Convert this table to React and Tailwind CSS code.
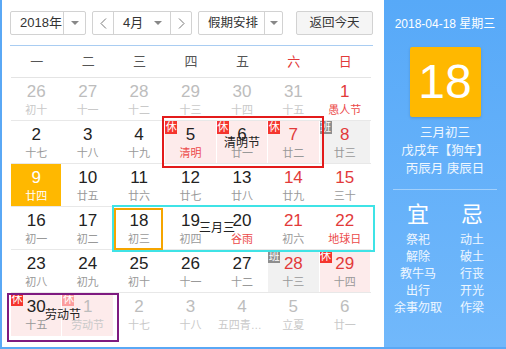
import React from 'react';

const weekdays = ['一', '二', '三', '四', '五', '六', '日'];

// d: day, l: lunar, o: other month, r: red number, lr: red lunar, b: badge, sel
const rows = [
  [
    { d: 26, l: '初十', o: true },
    { d: 27, l: '十一', o: true },
    { d: 28, l: '十二', o: true },
    { d: 29, l: '十三', o: true },
    { d: 30, l: '十四', o: true },
    { d: 31, l: '十五', o: true },
    { d: 1, l: '愚人节', r: true, lr: true },
  ],
  [
    { d: 2, l: '十七' },
    { d: 3, l: '十八' },
    { d: 4, l: '十九' },
    { d: 5, l: '清明', lr: true, b: '休' },
    { d: 6, l: '廿一', b: '休' },
    { d: 7, l: '廿二', r: true, b: '休' },
    { d: 8, l: '廿三', r: true, b: '班' },
  ],
  [
    { d: 9, l: '廿四', sel: true },
    { d: 10, l: '廿五' },
    { d: 11, l: '廿六' },
    { d: 12, l: '廿七' },
    { d: 13, l: '廿八' },
    { d: 14, l: '廿九', r: true },
    { d: 15, l: '三十', r: true },
  ],
  [
    { d: 16, l: '初一' },
    { d: 17, l: '初二' },
    { d: 18, l: '初三' },
    { d: 19, l: '初四' },
    { d: 20, l: '谷雨', lr: true },
    { d: 21, l: '初六', r: true },
    { d: 22, l: '地球日', r: true, lr: true },
  ],
  [
    { d: 23, l: '初八' },
    { d: 24, l: '初九' },
    { d: 25, l: '初十' },
    { d: 26, l: '十一' },
    { d: 27, l: '十二' },
    { d: 28, l: '十三', r: true, b: '班' },
    { d: 29, l: '十四', r: true, b: '休' },
  ],
  [
    { d: 30, l: '十五', b: '休' },
    { d: 1, l: '劳动节', o: true, b: '休' },
    { d: 2, l: '十七', o: true },
    { d: 3, l: '十八', o: true },
    { d: 4, l: '五四青年节', o: true },
    { d: 5, l: '立夏', o: true },
    { d: 6, l: '廿一', o: true },
  ],
];

const yi = ['祭祀', '解除', '教牛马', '出行', '余事勿取'];
const ji = ['动土', '破土', '行丧', '开光', '作梁'];

function Caret() {
  return <span className="w-0 h-0 border-l-[4px] border-r-[4px] border-t-[4px] border-l-transparent border-r-transparent border-t-[#888]" />;
}

function Chevron({ dir }) {
  return (
    <svg width="7" height="11" viewBox="0 0 7 11" fill="none" stroke="#777" strokeWidth="1">
      {dir === 'left' ? <path d="M6 0.5 L1 5.5 L6 10.5" /> : <path d="M1 0.5 L6 5.5 L1 10.5" />}
    </svg>
  );
}

function Cell({ c }) {
  let bg = '';
  if (c.sel) bg = 'bg-[#ffb800]';
  else if (c.b === '休') bg = 'bg-[#fdebeb]';
  else if (c.b === '班') bg = 'bg-[#f1f1f1]';

  let num = 'text-[#222]';
  if (c.sel) num = 'text-white';
  else if (c.o) num = 'text-[#bdbdbd]';
  else if (c.r) num = 'text-[#e23a3a]';

  let lunar = 'text-[#999]';
  if (c.sel) lunar = 'text-white';
  else if (c.o) lunar = 'text-[#c9c9c9]';
  else if (c.lr) lunar = 'text-[#ec4a4a]';

  let badge = '';
  if (c.b === '休') badge = c.o ? 'bg-[#fc9d9d]' : 'bg-[#f5352e]';
  if (c.b === '班') badge = 'bg-[#8e8e8e]';

  return (
    <div className={`relative h-full flex flex-col items-center border-r border-white ${bg}`}>
      {c.b && (
        <span className={`absolute left-0 top-0 w-[12px] h-[13px] text-[11px] leading-[13px] text-white text-center ${badge}`}>
          {c.b}
        </span>
      )}
      <span className={`pt-[4px] text-[17px] leading-[20px] ${num}`}>{c.d}</span>
      <span className={`mt-[1px] w-full px-[1px] text-center truncate text-[11px] leading-[14px] ${lunar}`}>{c.l}</span>
    </div>
  );
}

export default function App() {
  return (
    <div className="w-[506px] h-[349px] flex border-l-2 border-b-2 border-[#5aa8f5] font-[family-name:Liberation_Sans,Noto_Sans_CJK_SC,sans-serif] overflow-hidden">
      {/* Left: calendar */}
      <div className="w-[382px] bg-white pl-[8px] pt-[11px] flex flex-col">
        {/* Toolbar */}
        <div className="flex items-center h-[24px] text-[12px] text-[#333]">
          <div className="flex h-full w-[76px] border border-[#d2d2d2] rounded-[2px]">
            <span className="flex-1 flex items-center pl-[9px] text-[13px]">2018年</span>
            <span className="w-[22px] flex items-center justify-center border-l border-[#d2d2d2]"><Caret /></span>
          </div>
          <div className="ml-[6px] flex h-full w-[100px] border border-[#d2d2d2] rounded-[2px]">
            <span className="w-[21px] flex items-center justify-center border-r border-[#d2d2d2]"><Chevron dir="left" /></span>
            <span className="flex-1 flex items-center justify-between pl-[9px] pr-[8px] text-[13px]">
              4月
              <Caret />
            </span>
            <span className="w-[21px] flex items-center justify-center border-l border-[#d2d2d2]"><Chevron dir="right" /></span>
          </div>
          <div className="ml-[6px] flex h-full w-[85px] border border-[#d2d2d2] rounded-[2px]">
            <span className="flex-1 flex items-center pl-[9px] text-[12.5px]">假期安排</span>
            <span className="w-[18px] flex items-center justify-center border-l border-[#d2d2d2]"><Caret /></span>
          </div>
          <button className="ml-[13px] h-full w-[77px] border border-[#d2d2d2] rounded-[2px] bg-[#f5f5f5] text-[12.5px] text-[#333]">
            返回今天
          </button>
        </div>

        <div className="mt-[10px] w-[363px] h-px bg-[#a9cdf2]" />

        {/* Weekday header */}
        <div className="ml-[1px] w-[360px] h-[32px] grid grid-cols-7 items-center border-b border-[#e4e4e4] text-[13px]">
          {weekdays.map((w, i) => (
            <span key={w} className={`text-center ${i >= 5 ? 'text-[#e23a3a]' : 'text-[#555]'}`}>{w}</span>
          ))}
        </div>

        {/* Days */}
        <div className="relative ml-[1px] w-[360px]">
          {rows.map((row, ri) => (
            <div key={ri} className={`grid grid-cols-7 h-[43px] ${ri < 5 ? 'border-b border-[#e8e8e8]' : ''}`}>
              {row.map((c, ci) => (
                <Cell key={ci} c={c} />
              ))}
            </div>
          ))}

          {/* Overlays */}
          <div className="absolute left-[151px] top-[38px] w-[162px] h-[52px] border-2 border-[#e31b1b]" />
          <span className="absolute left-[213px] top-[57px] text-[12px] leading-[16px] text-[#222]">清明节</span>

          <div className="absolute left-[101px] top-[127px] w-[263px] h-[47px] border-2 border-[#3fe3e6]" />
          <div className="absolute left-[103px] top-[130px] w-[49px] h-[42px] border-2 border-[#f5a500]" />
          <span className="absolute left-[188px] top-[142px] text-[12px] leading-[16px] text-[#222]">三月三</span>

          <div className="absolute left-[-4px] top-[215px] w-[112px] h-[49px] border-2 border-[#7e1a80]" />
          <span className="absolute left-[34px] top-[229px] text-[12px] leading-[16px] text-[#222]">劳动节</span>
        </div>
      </div>

      {/* Right: today panel */}
      <div className="w-[122px] bg-gradient-to-b from-[#57a9f8] to-[#71b8fb] flex flex-col items-center text-white">
        <span className="pt-[16px] text-[12px] leading-[16px] whitespace-nowrap">2018-04-18 星期三</span>
        <div className="mt-[15px] w-[71px] h-[70px] bg-[#ffb800] rounded-[2px] shadow-[0_1px_3px_rgba(0,0,0,0.15)] flex items-center justify-center">
          <span className="text-[48px] leading-none">18</span>
        </div>
        <div className="mt-[7px] flex flex-col items-center text-[12.5px] leading-[18px] text-white/90">
          <span>三月初三</span>
          <span>戊戌年【狗年】</span>
          <span>丙辰月 庚辰日</span>
        </div>
        <div className="mt-[11px] w-[104px] h-px bg-white/40" />
        <div className="mt-[11px] w-[108px] grid grid-cols-2 text-[22px] leading-[28px]">
          <span className="text-center">宜</span>
          <span className="text-center">忌</span>
        </div>
        <div className="mt-[3px] w-[108px] grid grid-cols-2 text-[12px] leading-[17px] text-white/90">
          <div className="flex flex-col items-center">
            {yi.map((t) => <span key={t}>{t}</span>)}
          </div>
          <div className="flex flex-col items-center">
            {ji.map((t) => <span key={t}>{t}</span>)}
          </div>
        </div>
      </div>
    </div>
  );
}
